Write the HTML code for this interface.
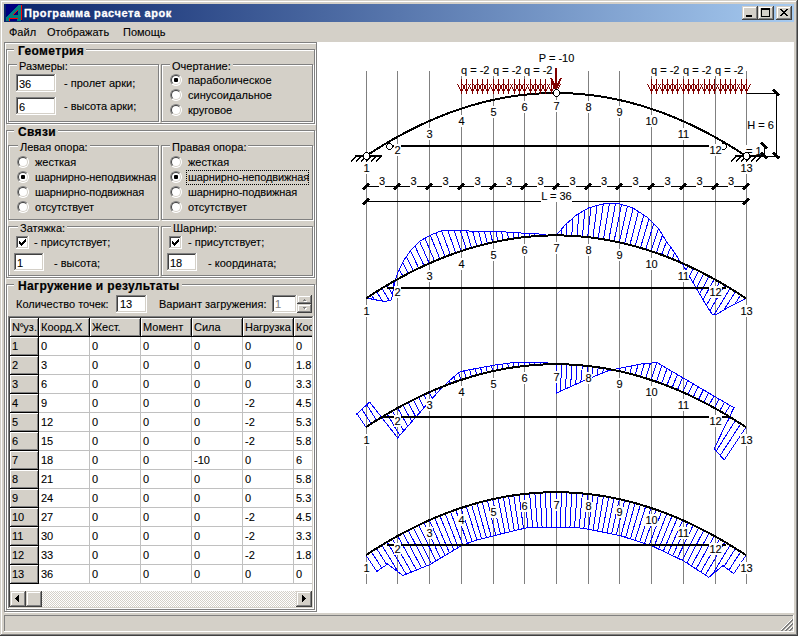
<!DOCTYPE html><html><head><meta charset="utf-8"><style>
html,body{margin:0;padding:0;width:798px;height:636px;overflow:hidden;background:#d4d0c8}
body>div,body div{position:absolute}
.t{white-space:nowrap;font-family:"Liberation Sans",sans-serif;font-size:11px;line-height:13px;color:#000;-webkit-text-stroke:0.1px currentColor}
.lb{white-space:nowrap;font-family:"Liberation Sans",sans-serif;font-size:11px;line-height:13px;color:#000;-webkit-text-stroke:0.1px #000}
.lb span{background:#fff;padding:0}
.rad{width:12px;height:12px}
.rad div{left:0;top:0;width:10px;height:10px;border-radius:50%;background:#fff;border:1px solid;border-color:#808080 #fff #fff #808080}
.rad div:after{content:"";position:absolute;left:0;top:0;width:8px;height:8px;border-radius:50%;border:1px solid;border-color:#404040 #d4d0c8 #d4d0c8 #404040}
.rad i{position:absolute;left:4px;top:4px;width:4px;height:4px;background:#000;border-radius:1px}
</style></head><body>
<div style="left:0;top:0;width:798px;height:636px;background:#d4d0c8"></div>
<div style="left:0px;top:0px;width:797px;height:1px;background:#d4d0c8;"></div>
<div style="left:0px;top:0px;width:1px;height:635px;background:#d4d0c8;"></div>
<div style="left:1px;top:1px;width:795px;height:1px;background:#ffffff;"></div>
<div style="left:1px;top:1px;width:1px;height:633px;background:#ffffff;"></div>
<div style="left:1px;top:634px;width:796px;height:1px;background:#808080;"></div>
<div style="left:796px;top:1px;width:1px;height:634px;background:#808080;"></div>
<div style="left:0px;top:635px;width:798px;height:1px;background:#404040;"></div>
<div style="left:797px;top:0px;width:1px;height:636px;background:#404040;"></div>
<div style="left:4px;top:4px;width:790px;height:18px;background:linear-gradient(to right,#0a246a,#a6caf0)"></div>
<svg style="position:absolute;left:0;top:0" width="30" height="24" shape-rendering="crispEdges"><rect x="6" y="4" width="16" height="17" fill="#000080"/><path d="M6,18 L18,5 L21,5 L21,21 L6,21 Z M13,15 L18,10 L18,15 Z M10,19 H17 V21 H10 Z" fill="#008080" fill-rule="evenodd"/><rect x="21" y="5" width="1" height="15" fill="#ff0000"/><rect x="9" y="18" width="9" height="1" fill="#ff0000"/><rect x="9" y="18" width="1" height="3" fill="#ff0000"/><path d="M13,14h1v1h-1zM14,13h1v1h-1zM15,12h1v1h-1zM16,11h1v1h-1zM17,10h1v1h-1z" fill="#ff0000"/></svg>
<div class="t" style="left:24px;top:7px;font-size:11px;font-weight:bold;color:#fff;letter-spacing:0.6px;-webkit-text-stroke:0.3px #fff;">Программа расчета арок</div>
<div style="left:742px;top:6px;width:16px;height:14px;background:#d4d0c8;"></div>
<div style="left:742px;top:6px;width:15px;height:1px;background:#d4d0c8;"></div>
<div style="left:742px;top:6px;width:1px;height:13px;background:#d4d0c8;"></div>
<div style="left:743px;top:7px;width:13px;height:1px;background:#ffffff;"></div>
<div style="left:743px;top:7px;width:1px;height:11px;background:#ffffff;"></div>
<div style="left:743px;top:18px;width:14px;height:1px;background:#808080;"></div>
<div style="left:756px;top:7px;width:1px;height:12px;background:#808080;"></div>
<div style="left:742px;top:19px;width:16px;height:1px;background:#404040;"></div>
<div style="left:757px;top:6px;width:1px;height:14px;background:#404040;"></div>
<div style="left:746px;top:15px;width:6px;height:2px;background:#000;"></div>
<div style="left:758px;top:6px;width:16px;height:14px;background:#d4d0c8;"></div>
<div style="left:758px;top:6px;width:15px;height:1px;background:#d4d0c8;"></div>
<div style="left:758px;top:6px;width:1px;height:13px;background:#d4d0c8;"></div>
<div style="left:759px;top:7px;width:13px;height:1px;background:#ffffff;"></div>
<div style="left:759px;top:7px;width:1px;height:11px;background:#ffffff;"></div>
<div style="left:759px;top:18px;width:14px;height:1px;background:#808080;"></div>
<div style="left:772px;top:7px;width:1px;height:12px;background:#808080;"></div>
<div style="left:758px;top:19px;width:16px;height:1px;background:#404040;"></div>
<div style="left:773px;top:6px;width:1px;height:14px;background:#404040;"></div>
<div style="left:761px;top:8px;width:7px;height:6px;border:1px solid #000;border-top-width:2px"></div>
<div style="left:776px;top:6px;width:16px;height:14px;background:#d4d0c8;"></div>
<div style="left:776px;top:6px;width:15px;height:1px;background:#d4d0c8;"></div>
<div style="left:776px;top:6px;width:1px;height:13px;background:#d4d0c8;"></div>
<div style="left:777px;top:7px;width:13px;height:1px;background:#ffffff;"></div>
<div style="left:777px;top:7px;width:1px;height:11px;background:#ffffff;"></div>
<div style="left:777px;top:18px;width:14px;height:1px;background:#808080;"></div>
<div style="left:790px;top:7px;width:1px;height:12px;background:#808080;"></div>
<div style="left:776px;top:19px;width:16px;height:1px;background:#404040;"></div>
<div style="left:791px;top:6px;width:1px;height:14px;background:#404040;"></div>
<svg style="position:absolute;left:776px;top:6px" width="16" height="14" shape-rendering="crispEdges"><path d="M4 3h2v1h-2zM10 3h2v1h-2zM5 4h2v1h-2zM9 4h2v1h-2zM6 5h4v1h-4zM7 6h2v1h-2zM6 7h4v1h-4zM5 8h2v1h-2zM9 8h2v1h-2zM4 9h2v1h-2zM10 9h2v1h-2z" fill="#000"/></svg>
<div class="t" style="left:9px;top:26px;font-size:11px;font-weight:normal;color:#000;">Файл</div>
<div class="t" style="left:47px;top:26px;font-size:11px;font-weight:normal;color:#000;">Отображать</div>
<div class="t" style="left:123px;top:26px;font-size:11px;font-weight:normal;color:#000;">Помощь</div>
<div style="left:5px;top:43px;width:313px;height:1px;background:#ffffff;"></div>
<div style="left:5px;top:43px;width:1px;height:570px;background:#ffffff;"></div>
<div style="left:5px;top:612px;width:313px;height:1px;background:#ffffff;"></div>
<div style="left:317px;top:43px;width:1px;height:570px;background:#ffffff;"></div>
<div style="left:4px;top:42px;width:313px;height:1px;background:#808080;"></div>
<div style="left:4px;top:42px;width:1px;height:570px;background:#808080;"></div>
<div style="left:4px;top:611px;width:313px;height:1px;background:#808080;"></div>
<div style="left:316px;top:42px;width:1px;height:570px;background:#808080;"></div>
<div style="left:7px;top:50px;width:309px;height:1px;background:#ffffff;"></div>
<div style="left:7px;top:50px;width:1px;height:75px;background:#ffffff;"></div>
<div style="left:7px;top:124px;width:309px;height:1px;background:#ffffff;"></div>
<div style="left:315px;top:50px;width:1px;height:75px;background:#ffffff;"></div>
<div style="left:6px;top:49px;width:309px;height:1px;background:#808080;"></div>
<div style="left:6px;top:49px;width:1px;height:75px;background:#808080;"></div>
<div style="left:6px;top:123px;width:309px;height:1px;background:#808080;"></div>
<div style="left:314px;top:49px;width:1px;height:75px;background:#808080;"></div>
<div class="t" style="left:18px;top:45px;font-size:12px;font-weight:bold;letter-spacing:0.35px;-webkit-text-stroke:0.2px #000;background:#d4d0c8;padding:0 2px 0 4px;margin-left:-4px;">Геометрия</div>
<div style="left:9px;top:65px;width:151px;height:1px;background:#ffffff;"></div>
<div style="left:9px;top:65px;width:1px;height:58px;background:#ffffff;"></div>
<div style="left:9px;top:122px;width:151px;height:1px;background:#ffffff;"></div>
<div style="left:159px;top:65px;width:1px;height:58px;background:#ffffff;"></div>
<div style="left:8px;top:64px;width:151px;height:1px;background:#808080;"></div>
<div style="left:8px;top:64px;width:1px;height:58px;background:#808080;"></div>
<div style="left:8px;top:121px;width:151px;height:1px;background:#808080;"></div>
<div style="left:158px;top:64px;width:1px;height:58px;background:#808080;"></div>
<div class="t" style="left:19px;top:60px;font-size:11px;font-weight:normal;color:#000;background:#d4d0c8;padding:0 2px 0 2px;margin-left:-2px;">Размеры:</div>
<div style="left:162px;top:65px;width:152px;height:1px;background:#ffffff;"></div>
<div style="left:162px;top:65px;width:1px;height:58px;background:#ffffff;"></div>
<div style="left:162px;top:122px;width:152px;height:1px;background:#ffffff;"></div>
<div style="left:313px;top:65px;width:1px;height:58px;background:#ffffff;"></div>
<div style="left:161px;top:64px;width:152px;height:1px;background:#808080;"></div>
<div style="left:161px;top:64px;width:1px;height:58px;background:#808080;"></div>
<div style="left:161px;top:121px;width:152px;height:1px;background:#808080;"></div>
<div style="left:312px;top:64px;width:1px;height:58px;background:#808080;"></div>
<div class="t" style="left:172px;top:60px;font-size:11px;font-weight:normal;color:#000;background:#d4d0c8;padding:0 2px 0 2px;margin-left:-2px;">Очертание:</div>
<div style="left:16px;top:74px;width:40px;height:18px;background:#ffffff;"></div>
<div style="left:16px;top:74px;width:39px;height:1px;background:#808080;"></div>
<div style="left:16px;top:74px;width:1px;height:17px;background:#808080;"></div>
<div style="left:17px;top:75px;width:37px;height:1px;background:#404040;"></div>
<div style="left:17px;top:75px;width:1px;height:15px;background:#404040;"></div>
<div style="left:17px;top:90px;width:38px;height:1px;background:#d4d0c8;"></div>
<div style="left:54px;top:75px;width:1px;height:16px;background:#d4d0c8;"></div>
<div style="left:16px;top:91px;width:40px;height:1px;background:#ffffff;"></div>
<div style="left:55px;top:74px;width:1px;height:18px;background:#ffffff;"></div>
<div class="t" style="left:19px;top:78px;font-size:11px;font-weight:normal;color:#000;">36</div>
<div style="left:16px;top:97px;width:40px;height:18px;background:#ffffff;"></div>
<div style="left:16px;top:97px;width:39px;height:1px;background:#808080;"></div>
<div style="left:16px;top:97px;width:1px;height:17px;background:#808080;"></div>
<div style="left:17px;top:98px;width:37px;height:1px;background:#404040;"></div>
<div style="left:17px;top:98px;width:1px;height:15px;background:#404040;"></div>
<div style="left:17px;top:113px;width:38px;height:1px;background:#d4d0c8;"></div>
<div style="left:54px;top:98px;width:1px;height:16px;background:#d4d0c8;"></div>
<div style="left:16px;top:114px;width:40px;height:1px;background:#ffffff;"></div>
<div style="left:55px;top:97px;width:1px;height:18px;background:#ffffff;"></div>
<div class="t" style="left:19px;top:101px;font-size:11px;font-weight:normal;color:#000;">6</div>
<div class="t" style="left:64px;top:77px;font-size:11px;font-weight:normal;color:#000;">- пролет арки;</div>
<div class="t" style="left:64px;top:100px;font-size:11px;font-weight:normal;color:#000;">- высота арки;</div>
<div class="rad" style="left:170px;top:74px;"><div></div><i></i></div>
<div class="t" style="left:188px;top:74px;font-size:11px;font-weight:normal;color:#000;">параболическое</div>
<div class="rad" style="left:170px;top:89px;"><div></div></div>
<div class="t" style="left:188px;top:89px;font-size:11px;font-weight:normal;color:#000;">синусоидальное</div>
<div class="rad" style="left:170px;top:104px;"><div></div></div>
<div class="t" style="left:188px;top:104px;font-size:11px;font-weight:normal;color:#000;">круговое</div>
<div style="left:7px;top:131px;width:309px;height:1px;background:#ffffff;"></div>
<div style="left:7px;top:131px;width:1px;height:148px;background:#ffffff;"></div>
<div style="left:7px;top:278px;width:309px;height:1px;background:#ffffff;"></div>
<div style="left:315px;top:131px;width:1px;height:148px;background:#ffffff;"></div>
<div style="left:6px;top:130px;width:309px;height:1px;background:#808080;"></div>
<div style="left:6px;top:130px;width:1px;height:148px;background:#808080;"></div>
<div style="left:6px;top:277px;width:309px;height:1px;background:#808080;"></div>
<div style="left:314px;top:130px;width:1px;height:148px;background:#808080;"></div>
<div class="t" style="left:18px;top:126px;font-size:12px;font-weight:bold;letter-spacing:0.35px;-webkit-text-stroke:0.2px #000;background:#d4d0c8;padding:0 2px 0 4px;margin-left:-4px;">Связи</div>
<div style="left:9px;top:146px;width:151px;height:1px;background:#ffffff;"></div>
<div style="left:9px;top:146px;width:1px;height:75px;background:#ffffff;"></div>
<div style="left:9px;top:220px;width:151px;height:1px;background:#ffffff;"></div>
<div style="left:159px;top:146px;width:1px;height:75px;background:#ffffff;"></div>
<div style="left:8px;top:145px;width:151px;height:1px;background:#808080;"></div>
<div style="left:8px;top:145px;width:1px;height:75px;background:#808080;"></div>
<div style="left:8px;top:219px;width:151px;height:1px;background:#808080;"></div>
<div style="left:158px;top:145px;width:1px;height:75px;background:#808080;"></div>
<div class="t" style="left:20px;top:141px;font-size:11px;font-weight:normal;color:#000;background:#d4d0c8;padding:0 2px 0 2px;margin-left:-2px;">Левая опора:</div>
<div style="left:162px;top:146px;width:152px;height:1px;background:#ffffff;"></div>
<div style="left:162px;top:146px;width:1px;height:75px;background:#ffffff;"></div>
<div style="left:162px;top:220px;width:152px;height:1px;background:#ffffff;"></div>
<div style="left:313px;top:146px;width:1px;height:75px;background:#ffffff;"></div>
<div style="left:161px;top:145px;width:152px;height:1px;background:#808080;"></div>
<div style="left:161px;top:145px;width:1px;height:75px;background:#808080;"></div>
<div style="left:161px;top:219px;width:152px;height:1px;background:#808080;"></div>
<div style="left:312px;top:145px;width:1px;height:75px;background:#808080;"></div>
<div class="t" style="left:172px;top:141px;font-size:11px;font-weight:normal;color:#000;background:#d4d0c8;padding:0 2px 0 2px;margin-left:-2px;">Правая опора:</div>
<div class="rad" style="left:17px;top:156px;"><div></div></div>
<div class="t" style="left:35px;top:156px;font-size:11px;font-weight:normal;color:#000;">жесткая</div>
<div class="rad" style="left:170px;top:156px;"><div></div></div>
<div class="t" style="left:188px;top:156px;font-size:11px;font-weight:normal;color:#000;">жесткая</div>
<div class="rad" style="left:17px;top:171px;"><div></div><i></i></div>
<div class="t" style="left:35px;top:171px;font-size:11px;font-weight:normal;color:#000;letter-spacing:-0.1px;">шарнирно-неподвижная</div>
<div class="rad" style="left:170px;top:171px;"><div></div><i></i></div>
<div class="t" style="left:188px;top:171px;font-size:11px;font-weight:normal;color:#000;letter-spacing:-0.1px;">шарнирно-неподвижная</div>
<div class="rad" style="left:17px;top:186px;"><div></div></div>
<div class="t" style="left:35px;top:186px;font-size:11px;font-weight:normal;color:#000;letter-spacing:-0.1px;">шарнирно-подвижная</div>
<div class="rad" style="left:170px;top:186px;"><div></div></div>
<div class="t" style="left:188px;top:186px;font-size:11px;font-weight:normal;color:#000;letter-spacing:-0.1px;">шарнирно-подвижная</div>
<div class="rad" style="left:17px;top:201px;"><div></div></div>
<div class="t" style="left:35px;top:201px;font-size:11px;font-weight:normal;color:#000;">отсутствует</div>
<div class="rad" style="left:170px;top:201px;"><div></div></div>
<div class="t" style="left:188px;top:201px;font-size:11px;font-weight:normal;color:#000;">отсутствует</div>
<div style="left:186px;top:170px;width:121px;height:13px;border:1px dotted #000"></div>
<div style="left:9px;top:227px;width:151px;height:1px;background:#ffffff;"></div>
<div style="left:9px;top:227px;width:1px;height:50px;background:#ffffff;"></div>
<div style="left:9px;top:276px;width:151px;height:1px;background:#ffffff;"></div>
<div style="left:159px;top:227px;width:1px;height:50px;background:#ffffff;"></div>
<div style="left:8px;top:226px;width:151px;height:1px;background:#808080;"></div>
<div style="left:8px;top:226px;width:1px;height:50px;background:#808080;"></div>
<div style="left:8px;top:275px;width:151px;height:1px;background:#808080;"></div>
<div style="left:158px;top:226px;width:1px;height:50px;background:#808080;"></div>
<div class="t" style="left:20px;top:222px;font-size:11px;font-weight:normal;color:#000;background:#d4d0c8;padding:0 2px 0 2px;margin-left:-2px;">Затяжка:</div>
<div style="left:162px;top:227px;width:152px;height:1px;background:#ffffff;"></div>
<div style="left:162px;top:227px;width:1px;height:50px;background:#ffffff;"></div>
<div style="left:162px;top:276px;width:152px;height:1px;background:#ffffff;"></div>
<div style="left:313px;top:227px;width:1px;height:50px;background:#ffffff;"></div>
<div style="left:161px;top:226px;width:152px;height:1px;background:#808080;"></div>
<div style="left:161px;top:226px;width:1px;height:50px;background:#808080;"></div>
<div style="left:161px;top:275px;width:152px;height:1px;background:#808080;"></div>
<div style="left:312px;top:226px;width:1px;height:50px;background:#808080;"></div>
<div class="t" style="left:173px;top:222px;font-size:11px;font-weight:normal;color:#000;background:#d4d0c8;padding:0 2px 0 2px;margin-left:-2px;">Шарнир:</div>
<div style="left:16px;top:236px;width:13px;height:13px;background:#ffffff;"></div>
<div style="left:16px;top:236px;width:12px;height:1px;background:#808080;"></div>
<div style="left:16px;top:236px;width:1px;height:12px;background:#808080;"></div>
<div style="left:17px;top:237px;width:10px;height:1px;background:#404040;"></div>
<div style="left:17px;top:237px;width:1px;height:10px;background:#404040;"></div>
<div style="left:17px;top:247px;width:11px;height:1px;background:#d4d0c8;"></div>
<div style="left:27px;top:237px;width:1px;height:11px;background:#d4d0c8;"></div>
<div style="left:16px;top:248px;width:13px;height:1px;background:#ffffff;"></div>
<div style="left:28px;top:236px;width:1px;height:13px;background:#ffffff;"></div>
<svg style="position:absolute;left:16px;top:236px" width="13" height="13" shape-rendering="crispEdges"><path d="M3 5h1v3h-1zM4 6h1v3h-1zM5 7h1v3h-1zM6 6h1v3h-1zM7 5h1v3h-1zM8 4h1v3h-1zM9 3h1v3h-1z" fill="#000"/></svg>
<div class="t" style="left:34px;top:236px;font-size:11px;font-weight:normal;color:#000;">- присутствует;</div>
<div style="left:169px;top:236px;width:13px;height:13px;background:#ffffff;"></div>
<div style="left:169px;top:236px;width:12px;height:1px;background:#808080;"></div>
<div style="left:169px;top:236px;width:1px;height:12px;background:#808080;"></div>
<div style="left:170px;top:237px;width:10px;height:1px;background:#404040;"></div>
<div style="left:170px;top:237px;width:1px;height:10px;background:#404040;"></div>
<div style="left:170px;top:247px;width:11px;height:1px;background:#d4d0c8;"></div>
<div style="left:180px;top:237px;width:1px;height:11px;background:#d4d0c8;"></div>
<div style="left:169px;top:248px;width:13px;height:1px;background:#ffffff;"></div>
<div style="left:181px;top:236px;width:1px;height:13px;background:#ffffff;"></div>
<svg style="position:absolute;left:169px;top:236px" width="13" height="13" shape-rendering="crispEdges"><path d="M3 5h1v3h-1zM4 6h1v3h-1zM5 7h1v3h-1zM6 6h1v3h-1zM7 5h1v3h-1zM8 4h1v3h-1zM9 3h1v3h-1z" fill="#000"/></svg>
<div class="t" style="left:188px;top:236px;font-size:11px;font-weight:normal;color:#000;">- присутствует;</div>
<div style="left:14px;top:253px;width:30px;height:18px;background:#ffffff;"></div>
<div style="left:14px;top:253px;width:29px;height:1px;background:#808080;"></div>
<div style="left:14px;top:253px;width:1px;height:17px;background:#808080;"></div>
<div style="left:15px;top:254px;width:27px;height:1px;background:#404040;"></div>
<div style="left:15px;top:254px;width:1px;height:15px;background:#404040;"></div>
<div style="left:15px;top:269px;width:28px;height:1px;background:#d4d0c8;"></div>
<div style="left:42px;top:254px;width:1px;height:16px;background:#d4d0c8;"></div>
<div style="left:14px;top:270px;width:30px;height:1px;background:#ffffff;"></div>
<div style="left:43px;top:253px;width:1px;height:18px;background:#ffffff;"></div>
<div class="t" style="left:17px;top:257px;font-size:11px;font-weight:normal;color:#000;">1</div>
<div style="left:167px;top:253px;width:30px;height:18px;background:#ffffff;"></div>
<div style="left:167px;top:253px;width:29px;height:1px;background:#808080;"></div>
<div style="left:167px;top:253px;width:1px;height:17px;background:#808080;"></div>
<div style="left:168px;top:254px;width:27px;height:1px;background:#404040;"></div>
<div style="left:168px;top:254px;width:1px;height:15px;background:#404040;"></div>
<div style="left:168px;top:269px;width:28px;height:1px;background:#d4d0c8;"></div>
<div style="left:195px;top:254px;width:1px;height:16px;background:#d4d0c8;"></div>
<div style="left:167px;top:270px;width:30px;height:1px;background:#ffffff;"></div>
<div style="left:196px;top:253px;width:1px;height:18px;background:#ffffff;"></div>
<div class="t" style="left:170px;top:257px;font-size:11px;font-weight:normal;color:#000;">18</div>
<div class="t" style="left:54px;top:257px;font-size:11px;font-weight:normal;color:#000;">- высота;</div>
<div class="t" style="left:208px;top:257px;font-size:11px;font-weight:normal;color:#000;">- координата;</div>
<div style="left:7px;top:285px;width:309px;height:1px;background:#ffffff;"></div>
<div style="left:7px;top:285px;width:1px;height:326px;background:#ffffff;"></div>
<div style="left:7px;top:610px;width:309px;height:1px;background:#ffffff;"></div>
<div style="left:315px;top:285px;width:1px;height:326px;background:#ffffff;"></div>
<div style="left:6px;top:284px;width:309px;height:1px;background:#808080;"></div>
<div style="left:6px;top:284px;width:1px;height:326px;background:#808080;"></div>
<div style="left:6px;top:609px;width:309px;height:1px;background:#808080;"></div>
<div style="left:314px;top:284px;width:1px;height:326px;background:#808080;"></div>
<div class="t" style="left:18px;top:280px;font-size:12px;font-weight:bold;letter-spacing:0.35px;-webkit-text-stroke:0.2px #000;background:#d4d0c8;padding:0 2px 0 4px;margin-left:-4px;">Нагружение и результаты</div>
<div class="t" style="left:16px;top:298px;font-size:11px;font-weight:normal;color:#000;">Количество точек:</div>
<div style="left:116px;top:295px;width:31px;height:18px;background:#ffffff;"></div>
<div style="left:116px;top:295px;width:30px;height:1px;background:#808080;"></div>
<div style="left:116px;top:295px;width:1px;height:17px;background:#808080;"></div>
<div style="left:117px;top:296px;width:28px;height:1px;background:#404040;"></div>
<div style="left:117px;top:296px;width:1px;height:15px;background:#404040;"></div>
<div style="left:117px;top:311px;width:29px;height:1px;background:#d4d0c8;"></div>
<div style="left:145px;top:296px;width:1px;height:16px;background:#d4d0c8;"></div>
<div style="left:116px;top:312px;width:31px;height:1px;background:#ffffff;"></div>
<div style="left:146px;top:295px;width:1px;height:18px;background:#ffffff;"></div>
<div class="t" style="left:120px;top:298px;font-size:11px;font-weight:normal;color:#000;">13</div>
<div class="t" style="left:159px;top:298px;font-size:11px;font-weight:normal;color:#000;">Вариант загружения:</div>
<div style="left:272px;top:295px;width:25px;height:18px;background:#ffffff;"></div>
<div style="left:272px;top:295px;width:24px;height:1px;background:#808080;"></div>
<div style="left:272px;top:295px;width:1px;height:17px;background:#808080;"></div>
<div style="left:273px;top:296px;width:22px;height:1px;background:#404040;"></div>
<div style="left:273px;top:296px;width:1px;height:15px;background:#404040;"></div>
<div style="left:273px;top:311px;width:23px;height:1px;background:#d4d0c8;"></div>
<div style="left:295px;top:296px;width:1px;height:16px;background:#d4d0c8;"></div>
<div style="left:272px;top:312px;width:25px;height:1px;background:#ffffff;"></div>
<div style="left:296px;top:295px;width:1px;height:18px;background:#ffffff;"></div>
<div class="t" style="left:275px;top:298px;font-size:11px;font-weight:normal;color:#808080;text-shadow:1px 1px 0 #fff;">1</div>
<div style="left:297px;top:295px;width:15px;height:9px;background:#d4d0c8;"></div>
<div style="left:297px;top:295px;width:14px;height:1px;background:#d4d0c8;"></div>
<div style="left:297px;top:295px;width:1px;height:8px;background:#d4d0c8;"></div>
<div style="left:298px;top:296px;width:12px;height:1px;background:#ffffff;"></div>
<div style="left:298px;top:296px;width:1px;height:6px;background:#ffffff;"></div>
<div style="left:298px;top:302px;width:13px;height:1px;background:#808080;"></div>
<div style="left:310px;top:296px;width:1px;height:7px;background:#808080;"></div>
<div style="left:297px;top:303px;width:15px;height:1px;background:#404040;"></div>
<div style="left:311px;top:295px;width:1px;height:9px;background:#404040;"></div>
<div style="left:297px;top:304px;width:15px;height:9px;background:#d4d0c8;"></div>
<div style="left:297px;top:304px;width:14px;height:1px;background:#d4d0c8;"></div>
<div style="left:297px;top:304px;width:1px;height:8px;background:#d4d0c8;"></div>
<div style="left:298px;top:305px;width:12px;height:1px;background:#ffffff;"></div>
<div style="left:298px;top:305px;width:1px;height:6px;background:#ffffff;"></div>
<div style="left:298px;top:311px;width:13px;height:1px;background:#808080;"></div>
<div style="left:310px;top:305px;width:1px;height:7px;background:#808080;"></div>
<div style="left:297px;top:312px;width:15px;height:1px;background:#404040;"></div>
<div style="left:311px;top:304px;width:1px;height:9px;background:#404040;"></div>
<svg style="position:absolute;left:297px;top:295px" width="15" height="18" shape-rendering="crispEdges"><path d="M8,5h1v1h-1zM7,6h3v1h-3zM7,13h3v1h-3zM8,14h1v1h-1z" fill="#fff"/><path d="M7,4h1v1h-1zM6,5h3v1h-3zM6,12h3v1h-3zM7,13h1v1h-1z" fill="#808080"/></svg>
<div style="left:8px;top:316px;width:306px;height:293px;background:#ffffff;"></div>
<div style="left:8px;top:316px;width:305px;height:1px;background:#808080;"></div>
<div style="left:8px;top:316px;width:1px;height:292px;background:#808080;"></div>
<div style="left:9px;top:317px;width:303px;height:1px;background:#404040;"></div>
<div style="left:9px;top:317px;width:1px;height:290px;background:#404040;"></div>
<div style="left:9px;top:607px;width:304px;height:1px;background:#d4d0c8;"></div>
<div style="left:312px;top:317px;width:1px;height:291px;background:#d4d0c8;"></div>
<div style="left:8px;top:608px;width:306px;height:1px;background:#ffffff;"></div>
<div style="left:313px;top:316px;width:1px;height:293px;background:#ffffff;"></div>
<div style="left:10px;top:318px;width:302px;height:289px;background:#fff;overflow:hidden">
<div style="left:0;top:18px;width:302px;height:1px;background:#000"></div>
<div style="left:28px;top:0;width:1px;height:266px;background:#000"></div>
<div style="left:0px;top:0px;width:28px;height:18px;background:#d4d0c8;box-shadow:inset 1px 1px 0 #fff, inset -1px -1px 0 #808080;overflow:hidden"><div class="t" style="left:2px;top:3px"><span style="letter-spacing:-0.5px">N°</span>уз.</div></div>
<div style="left:28px;top:0;width:1px;height:18px;background:#000"></div>
<div style="left:29px;top:0px;width:50px;height:18px;background:#d4d0c8;box-shadow:inset 1px 1px 0 #fff, inset -1px -1px 0 #808080;overflow:hidden"><div class="t" style="left:2px;top:3px">Коорд.X</div></div>
<div style="left:79px;top:0;width:1px;height:18px;background:#000"></div>
<div style="left:80px;top:0px;width:50px;height:18px;background:#d4d0c8;box-shadow:inset 1px 1px 0 #fff, inset -1px -1px 0 #808080;overflow:hidden"><div class="t" style="left:2px;top:3px">Жест.</div></div>
<div style="left:130px;top:0;width:1px;height:18px;background:#000"></div>
<div style="left:131px;top:0px;width:50px;height:18px;background:#d4d0c8;box-shadow:inset 1px 1px 0 #fff, inset -1px -1px 0 #808080;overflow:hidden"><div class="t" style="left:2px;top:3px">Момент</div></div>
<div style="left:181px;top:0;width:1px;height:18px;background:#000"></div>
<div style="left:182px;top:0px;width:50px;height:18px;background:#d4d0c8;box-shadow:inset 1px 1px 0 #fff, inset -1px -1px 0 #808080;overflow:hidden"><div class="t" style="left:2px;top:3px">Сила</div></div>
<div style="left:232px;top:0;width:1px;height:18px;background:#000"></div>
<div style="left:233px;top:0px;width:50px;height:18px;background:#d4d0c8;box-shadow:inset 1px 1px 0 #fff, inset -1px -1px 0 #808080;overflow:hidden"><div class="t" style="left:2px;top:3px">Нагрузка</div></div>
<div style="left:283px;top:0;width:1px;height:18px;background:#000"></div>
<div style="left:284px;top:0px;width:50px;height:18px;background:#d4d0c8;box-shadow:inset 1px 1px 0 #fff, inset -1px -1px 0 #808080;overflow:hidden"><div class="t" style="left:2px;top:3px">Коорд.Y</div></div>
<div style="left:334px;top:0;width:1px;height:18px;background:#000"></div>
<div style="left:0px;top:19px;width:28px;height:18px;background:#d4d0c8;box-shadow:inset 1px 1px 0 #fff, inset -1px -1px 0 #808080;overflow:hidden"><div class="t" style="left:2px;top:3px">1</div></div>
<div style="left:0;top:37px;width:28px;height:1px;background:#000"></div>
<div style="left:29px;top:37px;width:273px;height:1px;background:#c0c0c0"></div>
<div style="left:79px;top:19px;width:1px;height:19px;background:#c0c0c0"></div>
<div class="t" style="left:31px;top:22px">0</div>
<div style="left:130px;top:19px;width:1px;height:19px;background:#c0c0c0"></div>
<div class="t" style="left:82px;top:22px">0</div>
<div style="left:181px;top:19px;width:1px;height:19px;background:#c0c0c0"></div>
<div class="t" style="left:133px;top:22px">0</div>
<div style="left:232px;top:19px;width:1px;height:19px;background:#c0c0c0"></div>
<div class="t" style="left:184px;top:22px">0</div>
<div style="left:283px;top:19px;width:1px;height:19px;background:#c0c0c0"></div>
<div class="t" style="left:235px;top:22px">0</div>
<div style="left:334px;top:19px;width:1px;height:19px;background:#c0c0c0"></div>
<div class="t" style="left:286px;top:22px">0</div>
<div style="left:0px;top:38px;width:28px;height:18px;background:#d4d0c8;box-shadow:inset 1px 1px 0 #fff, inset -1px -1px 0 #808080;overflow:hidden"><div class="t" style="left:2px;top:3px">2</div></div>
<div style="left:0;top:56px;width:28px;height:1px;background:#000"></div>
<div style="left:29px;top:56px;width:273px;height:1px;background:#c0c0c0"></div>
<div style="left:79px;top:38px;width:1px;height:19px;background:#c0c0c0"></div>
<div class="t" style="left:31px;top:41px">3</div>
<div style="left:130px;top:38px;width:1px;height:19px;background:#c0c0c0"></div>
<div class="t" style="left:82px;top:41px">0</div>
<div style="left:181px;top:38px;width:1px;height:19px;background:#c0c0c0"></div>
<div class="t" style="left:133px;top:41px">0</div>
<div style="left:232px;top:38px;width:1px;height:19px;background:#c0c0c0"></div>
<div class="t" style="left:184px;top:41px">0</div>
<div style="left:283px;top:38px;width:1px;height:19px;background:#c0c0c0"></div>
<div class="t" style="left:235px;top:41px">0</div>
<div style="left:334px;top:38px;width:1px;height:19px;background:#c0c0c0"></div>
<div class="t" style="left:286px;top:41px">1.8</div>
<div style="left:0px;top:57px;width:28px;height:18px;background:#d4d0c8;box-shadow:inset 1px 1px 0 #fff, inset -1px -1px 0 #808080;overflow:hidden"><div class="t" style="left:2px;top:3px">3</div></div>
<div style="left:0;top:75px;width:28px;height:1px;background:#000"></div>
<div style="left:29px;top:75px;width:273px;height:1px;background:#c0c0c0"></div>
<div style="left:79px;top:57px;width:1px;height:19px;background:#c0c0c0"></div>
<div class="t" style="left:31px;top:60px">6</div>
<div style="left:130px;top:57px;width:1px;height:19px;background:#c0c0c0"></div>
<div class="t" style="left:82px;top:60px">0</div>
<div style="left:181px;top:57px;width:1px;height:19px;background:#c0c0c0"></div>
<div class="t" style="left:133px;top:60px">0</div>
<div style="left:232px;top:57px;width:1px;height:19px;background:#c0c0c0"></div>
<div class="t" style="left:184px;top:60px">0</div>
<div style="left:283px;top:57px;width:1px;height:19px;background:#c0c0c0"></div>
<div class="t" style="left:235px;top:60px">0</div>
<div style="left:334px;top:57px;width:1px;height:19px;background:#c0c0c0"></div>
<div class="t" style="left:286px;top:60px">3.3</div>
<div style="left:0px;top:76px;width:28px;height:18px;background:#d4d0c8;box-shadow:inset 1px 1px 0 #fff, inset -1px -1px 0 #808080;overflow:hidden"><div class="t" style="left:2px;top:3px">4</div></div>
<div style="left:0;top:94px;width:28px;height:1px;background:#000"></div>
<div style="left:29px;top:94px;width:273px;height:1px;background:#c0c0c0"></div>
<div style="left:79px;top:76px;width:1px;height:19px;background:#c0c0c0"></div>
<div class="t" style="left:31px;top:79px">9</div>
<div style="left:130px;top:76px;width:1px;height:19px;background:#c0c0c0"></div>
<div class="t" style="left:82px;top:79px">0</div>
<div style="left:181px;top:76px;width:1px;height:19px;background:#c0c0c0"></div>
<div class="t" style="left:133px;top:79px">0</div>
<div style="left:232px;top:76px;width:1px;height:19px;background:#c0c0c0"></div>
<div class="t" style="left:184px;top:79px">0</div>
<div style="left:283px;top:76px;width:1px;height:19px;background:#c0c0c0"></div>
<div class="t" style="left:235px;top:79px">-2</div>
<div style="left:334px;top:76px;width:1px;height:19px;background:#c0c0c0"></div>
<div class="t" style="left:286px;top:79px">4.5</div>
<div style="left:0px;top:95px;width:28px;height:18px;background:#d4d0c8;box-shadow:inset 1px 1px 0 #fff, inset -1px -1px 0 #808080;overflow:hidden"><div class="t" style="left:2px;top:3px">5</div></div>
<div style="left:0;top:113px;width:28px;height:1px;background:#000"></div>
<div style="left:29px;top:113px;width:273px;height:1px;background:#c0c0c0"></div>
<div style="left:79px;top:95px;width:1px;height:19px;background:#c0c0c0"></div>
<div class="t" style="left:31px;top:98px">12</div>
<div style="left:130px;top:95px;width:1px;height:19px;background:#c0c0c0"></div>
<div class="t" style="left:82px;top:98px">0</div>
<div style="left:181px;top:95px;width:1px;height:19px;background:#c0c0c0"></div>
<div class="t" style="left:133px;top:98px">0</div>
<div style="left:232px;top:95px;width:1px;height:19px;background:#c0c0c0"></div>
<div class="t" style="left:184px;top:98px">0</div>
<div style="left:283px;top:95px;width:1px;height:19px;background:#c0c0c0"></div>
<div class="t" style="left:235px;top:98px">-2</div>
<div style="left:334px;top:95px;width:1px;height:19px;background:#c0c0c0"></div>
<div class="t" style="left:286px;top:98px">5.3</div>
<div style="left:0px;top:114px;width:28px;height:18px;background:#d4d0c8;box-shadow:inset 1px 1px 0 #fff, inset -1px -1px 0 #808080;overflow:hidden"><div class="t" style="left:2px;top:3px">6</div></div>
<div style="left:0;top:132px;width:28px;height:1px;background:#000"></div>
<div style="left:29px;top:132px;width:273px;height:1px;background:#c0c0c0"></div>
<div style="left:79px;top:114px;width:1px;height:19px;background:#c0c0c0"></div>
<div class="t" style="left:31px;top:117px">15</div>
<div style="left:130px;top:114px;width:1px;height:19px;background:#c0c0c0"></div>
<div class="t" style="left:82px;top:117px">0</div>
<div style="left:181px;top:114px;width:1px;height:19px;background:#c0c0c0"></div>
<div class="t" style="left:133px;top:117px">0</div>
<div style="left:232px;top:114px;width:1px;height:19px;background:#c0c0c0"></div>
<div class="t" style="left:184px;top:117px">0</div>
<div style="left:283px;top:114px;width:1px;height:19px;background:#c0c0c0"></div>
<div class="t" style="left:235px;top:117px">-2</div>
<div style="left:334px;top:114px;width:1px;height:19px;background:#c0c0c0"></div>
<div class="t" style="left:286px;top:117px">5.8</div>
<div style="left:0px;top:133px;width:28px;height:18px;background:#d4d0c8;box-shadow:inset 1px 1px 0 #fff, inset -1px -1px 0 #808080;overflow:hidden"><div class="t" style="left:2px;top:3px">7</div></div>
<div style="left:0;top:151px;width:28px;height:1px;background:#000"></div>
<div style="left:29px;top:151px;width:273px;height:1px;background:#c0c0c0"></div>
<div style="left:79px;top:133px;width:1px;height:19px;background:#c0c0c0"></div>
<div class="t" style="left:31px;top:136px">18</div>
<div style="left:130px;top:133px;width:1px;height:19px;background:#c0c0c0"></div>
<div class="t" style="left:82px;top:136px">0</div>
<div style="left:181px;top:133px;width:1px;height:19px;background:#c0c0c0"></div>
<div class="t" style="left:133px;top:136px">0</div>
<div style="left:232px;top:133px;width:1px;height:19px;background:#c0c0c0"></div>
<div class="t" style="left:184px;top:136px">-10</div>
<div style="left:283px;top:133px;width:1px;height:19px;background:#c0c0c0"></div>
<div class="t" style="left:235px;top:136px">0</div>
<div style="left:334px;top:133px;width:1px;height:19px;background:#c0c0c0"></div>
<div class="t" style="left:286px;top:136px">6</div>
<div style="left:0px;top:152px;width:28px;height:18px;background:#d4d0c8;box-shadow:inset 1px 1px 0 #fff, inset -1px -1px 0 #808080;overflow:hidden"><div class="t" style="left:2px;top:3px">8</div></div>
<div style="left:0;top:170px;width:28px;height:1px;background:#000"></div>
<div style="left:29px;top:170px;width:273px;height:1px;background:#c0c0c0"></div>
<div style="left:79px;top:152px;width:1px;height:19px;background:#c0c0c0"></div>
<div class="t" style="left:31px;top:155px">21</div>
<div style="left:130px;top:152px;width:1px;height:19px;background:#c0c0c0"></div>
<div class="t" style="left:82px;top:155px">0</div>
<div style="left:181px;top:152px;width:1px;height:19px;background:#c0c0c0"></div>
<div class="t" style="left:133px;top:155px">0</div>
<div style="left:232px;top:152px;width:1px;height:19px;background:#c0c0c0"></div>
<div class="t" style="left:184px;top:155px">0</div>
<div style="left:283px;top:152px;width:1px;height:19px;background:#c0c0c0"></div>
<div class="t" style="left:235px;top:155px">0</div>
<div style="left:334px;top:152px;width:1px;height:19px;background:#c0c0c0"></div>
<div class="t" style="left:286px;top:155px">5.8</div>
<div style="left:0px;top:171px;width:28px;height:18px;background:#d4d0c8;box-shadow:inset 1px 1px 0 #fff, inset -1px -1px 0 #808080;overflow:hidden"><div class="t" style="left:2px;top:3px">9</div></div>
<div style="left:0;top:189px;width:28px;height:1px;background:#000"></div>
<div style="left:29px;top:189px;width:273px;height:1px;background:#c0c0c0"></div>
<div style="left:79px;top:171px;width:1px;height:19px;background:#c0c0c0"></div>
<div class="t" style="left:31px;top:174px">24</div>
<div style="left:130px;top:171px;width:1px;height:19px;background:#c0c0c0"></div>
<div class="t" style="left:82px;top:174px">0</div>
<div style="left:181px;top:171px;width:1px;height:19px;background:#c0c0c0"></div>
<div class="t" style="left:133px;top:174px">0</div>
<div style="left:232px;top:171px;width:1px;height:19px;background:#c0c0c0"></div>
<div class="t" style="left:184px;top:174px">0</div>
<div style="left:283px;top:171px;width:1px;height:19px;background:#c0c0c0"></div>
<div class="t" style="left:235px;top:174px">0</div>
<div style="left:334px;top:171px;width:1px;height:19px;background:#c0c0c0"></div>
<div class="t" style="left:286px;top:174px">5.3</div>
<div style="left:0px;top:190px;width:28px;height:18px;background:#d4d0c8;box-shadow:inset 1px 1px 0 #fff, inset -1px -1px 0 #808080;overflow:hidden"><div class="t" style="left:2px;top:3px">10</div></div>
<div style="left:0;top:208px;width:28px;height:1px;background:#000"></div>
<div style="left:29px;top:208px;width:273px;height:1px;background:#c0c0c0"></div>
<div style="left:79px;top:190px;width:1px;height:19px;background:#c0c0c0"></div>
<div class="t" style="left:31px;top:193px">27</div>
<div style="left:130px;top:190px;width:1px;height:19px;background:#c0c0c0"></div>
<div class="t" style="left:82px;top:193px">0</div>
<div style="left:181px;top:190px;width:1px;height:19px;background:#c0c0c0"></div>
<div class="t" style="left:133px;top:193px">0</div>
<div style="left:232px;top:190px;width:1px;height:19px;background:#c0c0c0"></div>
<div class="t" style="left:184px;top:193px">0</div>
<div style="left:283px;top:190px;width:1px;height:19px;background:#c0c0c0"></div>
<div class="t" style="left:235px;top:193px">-2</div>
<div style="left:334px;top:190px;width:1px;height:19px;background:#c0c0c0"></div>
<div class="t" style="left:286px;top:193px">4.5</div>
<div style="left:0px;top:209px;width:28px;height:18px;background:#d4d0c8;box-shadow:inset 1px 1px 0 #fff, inset -1px -1px 0 #808080;overflow:hidden"><div class="t" style="left:2px;top:3px">11</div></div>
<div style="left:0;top:227px;width:28px;height:1px;background:#000"></div>
<div style="left:29px;top:227px;width:273px;height:1px;background:#c0c0c0"></div>
<div style="left:79px;top:209px;width:1px;height:19px;background:#c0c0c0"></div>
<div class="t" style="left:31px;top:212px">30</div>
<div style="left:130px;top:209px;width:1px;height:19px;background:#c0c0c0"></div>
<div class="t" style="left:82px;top:212px">0</div>
<div style="left:181px;top:209px;width:1px;height:19px;background:#c0c0c0"></div>
<div class="t" style="left:133px;top:212px">0</div>
<div style="left:232px;top:209px;width:1px;height:19px;background:#c0c0c0"></div>
<div class="t" style="left:184px;top:212px">0</div>
<div style="left:283px;top:209px;width:1px;height:19px;background:#c0c0c0"></div>
<div class="t" style="left:235px;top:212px">-2</div>
<div style="left:334px;top:209px;width:1px;height:19px;background:#c0c0c0"></div>
<div class="t" style="left:286px;top:212px">3.3</div>
<div style="left:0px;top:228px;width:28px;height:18px;background:#d4d0c8;box-shadow:inset 1px 1px 0 #fff, inset -1px -1px 0 #808080;overflow:hidden"><div class="t" style="left:2px;top:3px">12</div></div>
<div style="left:0;top:246px;width:28px;height:1px;background:#000"></div>
<div style="left:29px;top:246px;width:273px;height:1px;background:#c0c0c0"></div>
<div style="left:79px;top:228px;width:1px;height:19px;background:#c0c0c0"></div>
<div class="t" style="left:31px;top:231px">33</div>
<div style="left:130px;top:228px;width:1px;height:19px;background:#c0c0c0"></div>
<div class="t" style="left:82px;top:231px">0</div>
<div style="left:181px;top:228px;width:1px;height:19px;background:#c0c0c0"></div>
<div class="t" style="left:133px;top:231px">0</div>
<div style="left:232px;top:228px;width:1px;height:19px;background:#c0c0c0"></div>
<div class="t" style="left:184px;top:231px">0</div>
<div style="left:283px;top:228px;width:1px;height:19px;background:#c0c0c0"></div>
<div class="t" style="left:235px;top:231px">-2</div>
<div style="left:334px;top:228px;width:1px;height:19px;background:#c0c0c0"></div>
<div class="t" style="left:286px;top:231px">1.8</div>
<div style="left:0px;top:247px;width:28px;height:18px;background:#d4d0c8;box-shadow:inset 1px 1px 0 #fff, inset -1px -1px 0 #808080;overflow:hidden"><div class="t" style="left:2px;top:3px">13</div></div>
<div style="left:0;top:265px;width:28px;height:1px;background:#000"></div>
<div style="left:29px;top:265px;width:273px;height:1px;background:#c0c0c0"></div>
<div style="left:79px;top:247px;width:1px;height:19px;background:#c0c0c0"></div>
<div class="t" style="left:31px;top:250px">36</div>
<div style="left:130px;top:247px;width:1px;height:19px;background:#c0c0c0"></div>
<div class="t" style="left:82px;top:250px">0</div>
<div style="left:181px;top:247px;width:1px;height:19px;background:#c0c0c0"></div>
<div class="t" style="left:133px;top:250px">0</div>
<div style="left:232px;top:247px;width:1px;height:19px;background:#c0c0c0"></div>
<div class="t" style="left:184px;top:250px">0</div>
<div style="left:283px;top:247px;width:1px;height:19px;background:#c0c0c0"></div>
<div class="t" style="left:235px;top:250px">0</div>
<div style="left:334px;top:247px;width:1px;height:19px;background:#c0c0c0"></div>
<div class="t" style="left:286px;top:250px">0</div>
</div>
<div style="left:10px;top:591px;width:302px;height:16px;background-color:#fff;background-image:repeating-conic-gradient(#d4d0c8 0 25%, #fff 0 50%);background-size:2px 2px"></div>
<div style="left:10px;top:591px;width:16px;height:16px;background:#d4d0c8;"></div>
<div style="left:10px;top:591px;width:15px;height:1px;background:#d4d0c8;"></div>
<div style="left:10px;top:591px;width:1px;height:15px;background:#d4d0c8;"></div>
<div style="left:11px;top:592px;width:13px;height:1px;background:#ffffff;"></div>
<div style="left:11px;top:592px;width:1px;height:13px;background:#ffffff;"></div>
<div style="left:11px;top:605px;width:14px;height:1px;background:#808080;"></div>
<div style="left:24px;top:592px;width:1px;height:14px;background:#808080;"></div>
<div style="left:10px;top:606px;width:16px;height:1px;background:#404040;"></div>
<div style="left:25px;top:591px;width:1px;height:16px;background:#404040;"></div>
<div style="left:26px;top:591px;width:16px;height:16px;background:#d4d0c8;"></div>
<div style="left:26px;top:591px;width:15px;height:1px;background:#d4d0c8;"></div>
<div style="left:26px;top:591px;width:1px;height:15px;background:#d4d0c8;"></div>
<div style="left:27px;top:592px;width:13px;height:1px;background:#ffffff;"></div>
<div style="left:27px;top:592px;width:1px;height:13px;background:#ffffff;"></div>
<div style="left:27px;top:605px;width:14px;height:1px;background:#808080;"></div>
<div style="left:40px;top:592px;width:1px;height:14px;background:#808080;"></div>
<div style="left:26px;top:606px;width:16px;height:1px;background:#404040;"></div>
<div style="left:41px;top:591px;width:1px;height:16px;background:#404040;"></div>
<div style="left:296px;top:591px;width:16px;height:16px;background:#d4d0c8;"></div>
<div style="left:296px;top:591px;width:15px;height:1px;background:#d4d0c8;"></div>
<div style="left:296px;top:591px;width:1px;height:15px;background:#d4d0c8;"></div>
<div style="left:297px;top:592px;width:13px;height:1px;background:#ffffff;"></div>
<div style="left:297px;top:592px;width:1px;height:13px;background:#ffffff;"></div>
<div style="left:297px;top:605px;width:14px;height:1px;background:#808080;"></div>
<div style="left:310px;top:592px;width:1px;height:14px;background:#808080;"></div>
<div style="left:296px;top:606px;width:16px;height:1px;background:#404040;"></div>
<div style="left:311px;top:591px;width:1px;height:16px;background:#404040;"></div>
<svg style="position:absolute;left:10px;top:591px" width="16" height="16" shape-rendering="crispEdges"><path d="M5 7.5 L9 3.5 L9 11.5 Z" fill="#000"/></svg>
<svg style="position:absolute;left:296px;top:591px" width="16" height="16" shape-rendering="crispEdges"><path d="M10 7.5 L6 3.5 L6 11.5 Z" fill="#000"/></svg>
<div style="left:4px;top:615px;width:790px;height:1px;background:#808080;"></div>
<div style="left:4px;top:615px;width:1px;height:16px;background:#808080;"></div>
<div style="left:4px;top:631px;width:790px;height:1px;background:#ffffff;"></div>
<div style="left:793px;top:615px;width:1px;height:17px;background:#ffffff;"></div>
<svg style="position:absolute;left:780px;top:618px" width="14" height="14" shape-rendering="crispEdges"><path d="M12 1L1 12M12 5L5 12M12 9L9 12" stroke="#fff" stroke-width="1"/><path d="M13 1L1 13M13 2L2 13M13 5L5 13M13 6L6 13M13 9L9 13M13 10L10 13" stroke="#808080" stroke-width="1"/></svg>
<div style="left:317px;top:42px;width:477px;height:571px;background:#ffffff;"></div>
<svg style="position:absolute;left:0;top:0" width="798" height="636" shape-rendering="crispEdges"><rect x="366" y="71" width="1" height="513" fill="#808080"/><rect x="397" y="71" width="1" height="513" fill="#808080"/><rect x="429" y="71" width="1" height="513" fill="#808080"/><rect x="461" y="71" width="1" height="513" fill="#808080"/><rect x="493" y="71" width="1" height="513" fill="#808080"/><rect x="524" y="71" width="1" height="513" fill="#808080"/><rect x="556" y="71" width="1" height="513" fill="#808080"/><rect x="588" y="71" width="1" height="513" fill="#808080"/><rect x="619" y="71" width="1" height="513" fill="#808080"/><rect x="651" y="71" width="1" height="513" fill="#808080"/><rect x="683" y="71" width="1" height="513" fill="#808080"/><rect x="715" y="71" width="1" height="513" fill="#808080"/><rect x="746" y="71" width="1" height="513" fill="#808080"/><path d="M366,156.00 L368,154.68 L370,153.38 L372,152.08 L374,150.81 L376,149.54 L378,148.29 L380,147.06 L382,145.84 L384,144.63 L386,143.43 L388,142.26 L390,141.09 L392,139.94 L394,138.80 L396,137.68 L398,136.57 L400,135.47 L402,134.39 L404,133.32 L406,132.27 L408,131.23 L410,130.20 L412,129.19 L414,128.19 L416,127.20 L418,126.23 L420,125.28 L422,124.34 L424,123.41 L426,122.49 L428,121.59 L430,120.71 L432,119.83 L434,118.97 L436,118.13 L438,117.30 L440,116.48 L442,115.68 L444,114.89 L446,114.12 L448,113.36 L450,112.61 L452,111.88 L454,111.16 L456,110.45 L458,109.76 L460,109.08 L462,108.42 L464,107.77 L466,107.14 L468,106.51 L470,105.91 L472,105.31 L474,104.73 L476,104.17 L478,103.62 L480,103.08 L482,102.56 L484,102.05 L486,101.55 L488,101.07 L490,100.60 L492,100.15 L494,99.71 L496,99.28 L498,98.87 L500,98.47 L502,98.09 L504,97.72 L506,97.36 L508,97.02 L510,96.69 L512,96.38 L514,96.08 L516,95.79 L518,95.52 L520,95.26 L522,95.02 L524,94.79 L526,94.57 L528,94.37 L530,94.18 L532,94.01 L534,93.84 L536,93.70 L538,93.57 L540,93.45 L542,93.34 L544,93.25 L546,93.17 L548,93.11 L550,93.06 L552,93.03 L554,93.01 L556,93.00 L558,93.01 L560,93.03 L562,93.06 L564,93.11 L566,93.17 L568,93.25 L570,93.34 L572,93.45 L574,93.57 L576,93.70 L578,93.84 L580,94.01 L582,94.18 L584,94.37 L586,94.57 L588,94.79 L590,95.02 L592,95.26 L594,95.52 L596,95.79 L598,96.08 L600,96.38 L602,96.69 L604,97.02 L606,97.36 L608,97.72 L610,98.09 L612,98.47 L614,98.87 L616,99.28 L618,99.71 L620,100.15 L622,100.60 L624,101.07 L626,101.55 L628,102.05 L630,102.56 L632,103.08 L634,103.62 L636,104.17 L638,104.73 L640,105.31 L642,105.91 L644,106.51 L646,107.14 L648,107.77 L650,108.42 L652,109.08 L654,109.76 L656,110.45 L658,111.16 L660,111.88 L662,112.61 L664,113.36 L666,114.12 L668,114.89 L670,115.68 L672,116.48 L674,117.30 L676,118.13 L678,118.97 L680,119.83 L682,120.71 L684,121.59 L686,122.49 L688,123.41 L690,124.34 L692,125.28 L694,126.23 L696,127.20 L698,128.19 L700,129.19 L702,130.20 L704,131.23 L706,132.27 L708,133.32 L710,134.39 L712,135.47 L714,136.57 L716,137.68 L718,138.80 L720,139.94 L722,141.09 L724,142.26 L726,143.43 L728,144.63 L730,145.84 L732,147.06 L734,148.29 L736,149.54 L738,150.81 L740,152.08 L742,153.38 L744,154.68 L746,156.00" stroke="#000" stroke-width="2" fill="none"/><rect x="390" y="145" width="333" height="2" fill="#000"/><rect x="366" y="186" width="381" height="1" fill="#000"/><rect x="366" y="201" width="381" height="1" fill="#000"/><rect x="746" y="93" width="33" height="1" fill="#000"/><rect x="776" y="93" width="1" height="64" fill="#000"/><rect x="764" y="156" width="16" height="1" fill="#000"/><rect x="764" y="146" width="1" height="11" fill="#000"/><path d="M461.5,79 V94 M457.5,84 L461.5,92 L465.5,84 M466.5,79 V94 M462.5,84 L466.5,92 L470.5,84 M472.5,79 V94 M468.5,84 L472.5,92 L476.5,84 M477.5,79 V94 M473.5,84 L477.5,92 L481.5,84 M482.5,79 V94 M478.5,84 L482.5,92 L486.5,84 M487.5,79 V94 M483.5,84 L487.5,92 L491.5,84 M493.5,79 V94 M489.5,84 L493.5,92 L497.5,84 M498.5,79 V94 M494.5,84 L498.5,92 L502.5,84 M503.5,79 V94 M499.5,84 L503.5,92 L507.5,84 M508.5,79 V94 M504.5,84 L508.5,92 L512.5,84 M514.5,79 V94 M510.5,84 L514.5,92 L518.5,84 M519.5,79 V94 M515.5,84 L519.5,92 L523.5,84 M524.5,79 V94 M520.5,84 L524.5,92 L528.5,84 M530.5,79 V94 M526.5,84 L530.5,92 L534.5,84 M535.5,79 V94 M531.5,84 L535.5,92 L539.5,84 M540.5,79 V94 M536.5,84 L540.5,92 L544.5,84 M545.5,79 V94 M541.5,84 L545.5,92 L549.5,84 M551.5,79 V94 M547.5,84 L551.5,92 L555.5,84 M556.5,79 V94 M552.5,84 L556.5,92 L560.5,84 " stroke="#800000" stroke-width="1" fill="none"/><path d="M651.5,79 V94 M647.5,84 L651.5,92 L655.5,84 M656.5,79 V94 M652.5,84 L656.5,92 L660.5,84 M662.5,79 V94 M658.5,84 L662.5,92 L666.5,84 M667.5,79 V94 M663.5,84 L667.5,92 L671.5,84 M672.5,79 V94 M668.5,84 L672.5,92 L676.5,84 M677.5,79 V94 M673.5,84 L677.5,92 L681.5,84 M683.5,79 V94 M679.5,84 L683.5,92 L687.5,84 M688.5,79 V94 M684.5,84 L688.5,92 L692.5,84 M693.5,79 V94 M689.5,84 L693.5,92 L697.5,84 M698.5,79 V94 M694.5,84 L698.5,92 L702.5,84 M704.5,79 V94 M700.5,84 L704.5,92 L708.5,84 M709.5,79 V94 M705.5,84 L709.5,92 L713.5,84 M714.5,79 V94 M710.5,84 L714.5,92 L718.5,84 M720.5,79 V94 M716.5,84 L720.5,92 L724.5,84 M725.5,79 V94 M721.5,84 L725.5,92 L729.5,84 M730.5,79 V94 M726.5,84 L730.5,92 L734.5,84 M735.5,79 V94 M731.5,84 L735.5,92 L739.5,84 M741.5,79 V94 M737.5,84 L741.5,92 L745.5,84 M746.5,79 V94 M742.5,84 L746.5,92 L750.5,84 " stroke="#800000" stroke-width="1" fill="none"/><path d="M556,68 V89 M551,78 L556,89 L561,78" stroke="#800000" stroke-width="2" fill="none"/><path d="M388.5,143.5 H390.5 L392.5,145.5 V147.5 L390.5,149.5 H388.5 L386.5,147.5 V145.5 Z" fill="#fff" stroke="#000" stroke-width="1" shape-rendering="crispEdges"/><path d="M722.5,143.5 H724.5 L726.5,145.5 V147.5 L724.5,149.5 H722.5 L720.5,147.5 V145.5 Z" fill="#fff" stroke="#000" stroke-width="1" shape-rendering="crispEdges"/><path d="M371.28,294.95 L374.24,299.55 M376.56,291.59 L382.57,301.19 M381.83,288.34 L389.48,300.92 M387.11,285.18 L392.48,294.29 M392.39,282.12 L394.11,285.13 M397.67,279.15 L396.42,276.90 M402.94,276.28 L399.23,269.33 M408.22,273.51 L402.60,262.61 M413.50,270.84 L406.41,256.58 M418.78,268.26 L410.43,250.82 M424.06,265.78 L414.96,246.04 M429.33,263.40 L419.60,241.40 M434.61,261.12 L424.91,238.22 M439.89,258.93 L430.32,235.32 M445.17,256.84 L435.92,232.92 M450.44,254.84 L441.64,230.95 M455.72,252.95 L447.87,230.50 M461.00,251.15 L454.15,230.50 M466.28,249.45 L460.34,230.50 M471.56,247.84 L466.50,230.68 M476.83,246.34 L472.65,231.20 M482.11,244.93 L478.57,231.20 M487.39,243.62 L484.42,231.20 M492.67,242.40 L490.19,231.20 M497.94,241.28 L495.94,231.37 M503.22,240.26 L501.65,231.73 M508.50,239.34 L507.30,232.09 M513.78,238.51 L512.88,232.45 M519.06,237.78 L518.42,232.82 M524.33,237.15 L523.90,233.19 M529.61,236.62 L529.32,233.50 M534.89,236.18 L534.71,233.79 M540.17,235.84 L540.07,234.08 M561.28,235.45 L561.39,229.27 M566.56,235.59 L567.01,223.24 M571.83,235.84 L572.81,218.17 M577.11,236.18 L578.78,213.51 M582.39,236.62 L584.83,210.13 M587.67,237.15 L590.97,207.25 M592.94,237.78 L597.10,205.54 M598.22,238.51 L603.31,203.97 M603.50,239.34 L609.41,203.68 M608.78,240.26 L615.57,203.40 M614.06,241.28 L621.52,204.45 M619.33,242.40 L627.34,206.19 M624.61,243.62 L633.12,208.08 M629.89,244.93 L638.49,211.58 M635.17,246.34 L643.81,215.06 M640.44,247.84 L648.94,219.02 M645.72,249.45 L653.75,223.80 M651.00,251.15 L658.54,228.41 M656.28,252.95 L662.53,235.09 M661.56,254.84 L666.42,241.63 M666.83,256.84 L670.65,246.98 M672.11,258.93 L674.55,252.91 M677.39,261.12 L678.39,258.75 M687.94,265.78 L685.91,270.21 M693.22,268.26 L689.35,276.34 M698.50,270.84 L692.81,282.28 M703.78,273.51 L696.23,288.14 M709.06,276.28 L699.62,293.95 M714.33,279.15 L702.98,299.70 M719.61,282.12 L706.39,305.28 M724.89,285.18 L709.82,310.74 M730.17,288.34 L714.09,314.79 M735.44,291.59 L723.95,309.95 M740.72,294.95 L734.83,304.08 " stroke="#0000ff" stroke-width="1" fill="none"/><path d="M366.00,298.40 L369.00,298.50 L375.00,299.70 L382.60,301.20 L390.00,300.90 L391.60,299.70 L393.80,286.20 L395.30,281.00 L397.60,272.60 L403.60,260.60 L411.00,250.00 L420.00,241.00 L429.20,235.80 L439.70,231.30 L444.20,230.50 L465.30,230.50 L470.00,231.20 L493.30,231.20 L510.60,232.30 L525.60,233.30 L542.20,234.20 L543.70,234.80 L550.00,235.50 L556.30,235.30 L565.00,225.00 L577.00,214.50 L589.00,207.80 L602.60,204.00 L617.70,203.30 L632.70,207.80 L647.70,217.60 L650.50,220.80 L658.30,228.00 L667.00,242.60 L670.00,246.00 L680.60,262.10 L683.00,265.00 L688.80,275.40 L696.50,288.60 L704.20,301.80 L712.50,315.00 L716.30,314.50 L728.40,307.30 L744.00,299.50 L746.00,298.40" stroke="#0000ff" stroke-width="1" fill="none"/><path d="M366,298.40 L368,297.08 L370,295.78 L372,294.48 L374,293.21 L376,291.94 L378,290.69 L380,289.46 L382,288.24 L384,287.03 L386,285.83 L388,284.66 L390,283.49 L392,282.34 L394,281.20 L396,280.08 L398,278.97 L400,277.87 L402,276.79 L404,275.72 L406,274.67 L408,273.63 L410,272.60 L412,271.59 L414,270.59 L416,269.60 L418,268.63 L420,267.68 L422,266.74 L424,265.81 L426,264.89 L428,263.99 L430,263.11 L432,262.23 L434,261.37 L436,260.53 L438,259.70 L440,258.88 L442,258.08 L444,257.29 L446,256.52 L448,255.76 L450,255.01 L452,254.28 L454,253.56 L456,252.85 L458,252.16 L460,251.48 L462,250.82 L464,250.17 L466,249.54 L468,248.91 L470,248.31 L472,247.71 L474,247.13 L476,246.57 L478,246.02 L480,245.48 L482,244.96 L484,244.45 L486,243.95 L488,243.47 L490,243.00 L492,242.55 L494,242.11 L496,241.68 L498,241.27 L500,240.87 L502,240.49 L504,240.12 L506,239.76 L508,239.42 L510,239.09 L512,238.78 L514,238.48 L516,238.19 L518,237.92 L520,237.66 L522,237.42 L524,237.19 L526,236.97 L528,236.77 L530,236.58 L532,236.41 L534,236.24 L536,236.10 L538,235.97 L540,235.85 L542,235.74 L544,235.65 L546,235.57 L548,235.51 L550,235.46 L552,235.43 L554,235.41 L556,235.40 L558,235.41 L560,235.43 L562,235.46 L564,235.51 L566,235.57 L568,235.65 L570,235.74 L572,235.85 L574,235.97 L576,236.10 L578,236.24 L580,236.41 L582,236.58 L584,236.77 L586,236.97 L588,237.19 L590,237.42 L592,237.66 L594,237.92 L596,238.19 L598,238.48 L600,238.78 L602,239.09 L604,239.42 L606,239.76 L608,240.12 L610,240.49 L612,240.87 L614,241.27 L616,241.68 L618,242.11 L620,242.55 L622,243.00 L624,243.47 L626,243.95 L628,244.45 L630,244.96 L632,245.48 L634,246.02 L636,246.57 L638,247.13 L640,247.71 L642,248.31 L644,248.91 L646,249.54 L648,250.17 L650,250.82 L652,251.48 L654,252.16 L656,252.85 L658,253.56 L660,254.28 L662,255.01 L664,255.76 L666,256.52 L668,257.29 L670,258.08 L672,258.88 L674,259.70 L676,260.53 L678,261.37 L680,262.23 L682,263.11 L684,263.99 L686,264.89 L688,265.81 L690,266.74 L692,267.68 L694,268.63 L696,269.60 L698,270.59 L700,271.59 L702,272.60 L704,273.63 L706,274.67 L708,275.72 L710,276.79 L712,277.87 L714,278.97 L716,280.08 L718,281.20 L720,282.34 L722,283.49 L724,284.66 L726,285.83 L728,287.03 L730,288.24 L732,289.46 L734,290.69 L736,291.94 L738,293.21 L740,294.48 L742,295.78 L744,297.08 L746,298.40" stroke="#000" stroke-width="2" fill="none"/><rect x="387" y="287" width="339" height="2" fill="#000"/><path d="M366.00,427.20 L357.01,413.65 M371.28,423.75 L361.90,409.20 M376.56,420.39 L366.77,404.77 M381.83,417.14 L383.17,419.33 M387.11,413.98 L399.73,435.38 M392.39,410.92 L403.75,430.82 M397.67,407.95 L407.78,426.25 M402.94,405.08 L411.81,421.67 M408.22,402.31 L415.85,417.09 M413.50,399.64 L419.89,412.50 M418.78,397.06 L423.96,407.88 M424.06,394.58 L428.04,403.24 M429.33,392.20 L432.15,398.58 M434.61,389.92 L436.29,393.88 M439.89,387.73 L440.46,389.15 M450.44,383.64 L449.41,380.83 M455.72,381.75 L453.95,376.70 M461.00,379.95 L458.54,372.53 M466.28,378.25 L463.97,370.89 M471.56,376.64 L469.52,369.75 M476.83,375.14 L475.06,368.73 M482.11,373.73 L480.56,367.71 M487.39,372.42 L486.02,366.70 M492.67,371.20 L491.45,365.69 M497.94,370.08 L496.87,364.78 M503.22,369.06 L502.30,364.07 M508.50,368.14 L507.71,363.36 M513.78,367.31 L513.11,362.80 M519.06,366.58 L518.57,362.80 M524.33,365.95 L523.99,362.80 M529.61,365.42 L529.37,362.80 M534.89,364.98 L534.73,362.80 M540.17,364.64 L540.07,362.80 M545.44,364.39 L545.39,362.94 M550.72,364.25 L550.70,363.08 M561.28,364.25 L560.78,391.08 M566.56,364.39 L565.65,388.89 M571.83,364.64 L570.62,386.67 M577.11,364.98 L575.68,384.39 M582.39,365.42 L580.85,382.07 M587.67,365.95 L586.15,379.70 M592.94,366.58 L591.54,377.46 M598.22,367.31 L597.05,375.24 M603.50,368.14 L602.70,372.97 M608.78,369.06 L608.49,370.65 M619.33,371.20 L620.01,368.16 M624.61,372.42 L625.91,367.00 M629.89,373.73 L631.93,365.82 M635.17,375.14 L638.07,364.61 M640.44,376.64 L644.25,363.73 M645.72,378.25 L650.44,363.18 M651.00,379.95 L656.75,362.62 M656.28,381.75 L661.96,365.51 M661.56,383.64 L667.12,368.54 M666.83,385.64 L672.28,371.56 M672.11,387.73 L677.44,374.59 M677.39,389.92 L682.60,377.61 M682.67,392.20 L687.77,380.65 M687.94,394.58 L692.96,383.69 M693.22,397.06 L698.16,386.74 M698.50,399.64 L703.39,389.81 M703.78,402.31 L708.64,392.89 M709.06,405.08 L713.92,395.98 M714.33,407.95 L719.23,399.09 M719.61,410.92 L724.57,402.23 M724.89,413.98 L729.95,405.39 M730.17,417.14 L726.25,423.57 M735.44,420.39 L716.28,450.99 M740.72,423.75 L720.24,455.52 M746.00,427.20 L724.21,460.06 " stroke="#0000ff" stroke-width="1" fill="none"/><path d="M356.30,414.30 L369.70,402.10 L397.60,437.80 L441.30,388.20 L458.90,372.20 L465.50,370.50 L495.20,365.00 L512.00,362.80 L540.30,362.80 L555.30,363.20 L556.20,363.50 L556.50,393.00 L587.70,379.00 L609.60,370.20 L641.20,364.00 L657.00,362.60 L733.90,407.70 L714.20,448.60 L724.50,460.40" stroke="#0000ff" stroke-width="1" fill="none"/><path d="M366,427.20 L368,425.88 L370,424.58 L372,423.28 L374,422.01 L376,420.74 L378,419.49 L380,418.26 L382,417.04 L384,415.83 L386,414.63 L388,413.46 L390,412.29 L392,411.14 L394,410.00 L396,408.88 L398,407.77 L400,406.67 L402,405.59 L404,404.52 L406,403.47 L408,402.43 L410,401.40 L412,400.39 L414,399.39 L416,398.40 L418,397.43 L420,396.48 L422,395.54 L424,394.61 L426,393.69 L428,392.79 L430,391.91 L432,391.03 L434,390.17 L436,389.33 L438,388.50 L440,387.68 L442,386.88 L444,386.09 L446,385.32 L448,384.56 L450,383.81 L452,383.08 L454,382.36 L456,381.65 L458,380.96 L460,380.28 L462,379.62 L464,378.97 L466,378.34 L468,377.71 L470,377.11 L472,376.51 L474,375.93 L476,375.37 L478,374.82 L480,374.28 L482,373.76 L484,373.25 L486,372.75 L488,372.27 L490,371.80 L492,371.35 L494,370.91 L496,370.48 L498,370.07 L500,369.67 L502,369.29 L504,368.92 L506,368.56 L508,368.22 L510,367.89 L512,367.58 L514,367.28 L516,366.99 L518,366.72 L520,366.46 L522,366.22 L524,365.99 L526,365.77 L528,365.57 L530,365.38 L532,365.21 L534,365.04 L536,364.90 L538,364.77 L540,364.65 L542,364.54 L544,364.45 L546,364.37 L548,364.31 L550,364.26 L552,364.23 L554,364.21 L556,364.20 L558,364.21 L560,364.23 L562,364.26 L564,364.31 L566,364.37 L568,364.45 L570,364.54 L572,364.65 L574,364.77 L576,364.90 L578,365.04 L580,365.21 L582,365.38 L584,365.57 L586,365.77 L588,365.99 L590,366.22 L592,366.46 L594,366.72 L596,366.99 L598,367.28 L600,367.58 L602,367.89 L604,368.22 L606,368.56 L608,368.92 L610,369.29 L612,369.67 L614,370.07 L616,370.48 L618,370.91 L620,371.35 L622,371.80 L624,372.27 L626,372.75 L628,373.25 L630,373.76 L632,374.28 L634,374.82 L636,375.37 L638,375.93 L640,376.51 L642,377.11 L644,377.71 L646,378.34 L648,378.97 L650,379.62 L652,380.28 L654,380.96 L656,381.65 L658,382.36 L660,383.08 L662,383.81 L664,384.56 L666,385.32 L668,386.09 L670,386.88 L672,387.68 L674,388.50 L676,389.33 L678,390.17 L680,391.03 L682,391.91 L684,392.79 L686,393.69 L688,394.61 L690,395.54 L692,396.48 L694,397.43 L696,398.40 L698,399.39 L700,400.39 L702,401.40 L704,402.43 L706,403.47 L708,404.52 L710,405.59 L712,406.67 L714,407.77 L716,408.88 L718,410.00 L720,411.14 L722,412.29 L724,413.46 L726,414.63 L728,415.83 L730,417.04 L732,418.26 L734,419.49 L736,420.74 L738,422.01 L740,423.28 L742,424.58 L744,425.88 L746,427.20" stroke="#000" stroke-width="2" fill="none"/><rect x="383" y="416" width="347" height="2" fill="#000"/><path d="M366.00,555.20 L376.76,571.42 M371.28,551.75 L381.76,568.01 M376.56,548.39 L386.72,564.63 M381.83,545.14 L398.21,572.08 M387.11,541.98 L406.09,574.18 M392.39,538.92 L411.32,572.07 M397.67,535.95 L416.48,570.00 M402.94,533.08 L421.57,567.95 M408.22,530.31 L426.59,565.93 M413.50,527.64 L431.39,563.61 M418.78,525.06 L435.94,560.90 M424.06,522.58 L440.46,558.20 M429.33,520.20 L444.95,555.52 M434.61,517.92 L449.41,552.85 M439.89,515.73 L453.86,550.20 M445.17,513.64 L458.29,547.56 M450.44,511.64 L462.80,545.18 M455.72,509.75 L467.50,543.41 M461.00,507.95 L472.18,541.66 M466.28,506.25 L476.88,540.11 M471.56,504.64 L481.64,538.87 M476.83,503.14 L486.37,537.64 M482.11,501.73 L491.06,536.41 M487.39,500.42 L495.73,535.23 M492.67,499.20 L500.38,534.11 M497.94,498.08 L505.02,532.99 M503.22,497.06 L509.63,531.87 M508.50,496.14 L514.24,530.75 M513.78,495.31 L518.84,529.64 M519.06,494.58 L523.43,528.53 M524.33,493.95 L528.08,527.81 M529.61,493.42 L532.74,527.35 M534.89,492.98 L537.40,527.10 M540.17,492.64 L542.07,527.10 M545.44,492.39 L546.72,527.10 M550.72,492.25 L551.36,527.10 M556.00,492.20 L556.00,527.10 M561.28,492.25 L560.64,527.10 M566.56,492.39 L565.28,527.10 M571.83,492.64 L569.93,527.10 M577.11,492.98 L574.58,527.34 M582.39,493.42 L579.21,527.95 M587.67,493.95 L583.84,528.57 M592.94,494.58 L588.48,529.24 M598.22,495.31 L593.09,530.17 M603.50,496.14 L597.70,531.10 M608.78,497.06 L602.33,532.04 M614.06,498.08 L606.98,532.98 M619.33,499.20 L611.66,533.93 M624.61,500.42 L616.36,534.88 M629.89,501.73 L621.07,535.92 M635.17,503.14 L625.70,537.41 M640.44,504.64 L630.35,538.91 M645.72,506.25 L635.02,540.42 M651.00,507.95 L639.73,541.94 M656.28,509.75 L644.47,543.47 M661.56,511.64 L649.26,545.02 M666.83,513.64 L653.99,546.84 M672.11,515.73 L658.61,549.04 M677.39,517.92 L663.27,551.25 M682.67,520.20 L667.96,553.47 M687.94,522.58 L672.68,555.72 M693.22,525.06 L677.45,557.98 M698.50,527.64 L682.27,560.27 M703.78,530.31 L686.89,563.04 M709.06,533.08 L691.46,566.02 M714.33,535.95 L696.06,569.01 M719.61,538.92 L700.70,572.03 M724.89,541.98 L705.38,575.07 M730.17,545.14 L712.46,574.26 M735.44,548.39 L724.10,566.51 M740.72,551.75 L728.88,570.11 M746.00,555.20 L733.70,573.75 " stroke="#0000ff" stroke-width="1" fill="none"/><path d="M376.50,571.60 L387.50,564.10 L402.80,575.50 L429.40,564.80 L461.40,545.70 L475.00,540.60 L493.80,535.70 L525.20,528.10 L535.20,527.10 L572.80,527.10 L587.80,529.10 L620.40,535.70 L652.00,545.90 L683.60,560.90 L708.80,577.30 L722.90,565.60 L734.30,574.20" stroke="#0000ff" stroke-width="1" fill="none"/><path d="M366,555.20 L368,553.88 L370,552.58 L372,551.28 L374,550.01 L376,548.74 L378,547.49 L380,546.26 L382,545.04 L384,543.83 L386,542.63 L388,541.46 L390,540.29 L392,539.14 L394,538.00 L396,536.88 L398,535.77 L400,534.67 L402,533.59 L404,532.52 L406,531.47 L408,530.43 L410,529.40 L412,528.39 L414,527.39 L416,526.40 L418,525.43 L420,524.48 L422,523.54 L424,522.61 L426,521.69 L428,520.79 L430,519.91 L432,519.03 L434,518.17 L436,517.33 L438,516.50 L440,515.68 L442,514.88 L444,514.09 L446,513.32 L448,512.56 L450,511.81 L452,511.08 L454,510.36 L456,509.65 L458,508.96 L460,508.28 L462,507.62 L464,506.97 L466,506.34 L468,505.71 L470,505.11 L472,504.51 L474,503.93 L476,503.37 L478,502.82 L480,502.28 L482,501.76 L484,501.25 L486,500.75 L488,500.27 L490,499.80 L492,499.35 L494,498.91 L496,498.48 L498,498.07 L500,497.67 L502,497.29 L504,496.92 L506,496.56 L508,496.22 L510,495.89 L512,495.58 L514,495.28 L516,494.99 L518,494.72 L520,494.46 L522,494.22 L524,493.99 L526,493.77 L528,493.57 L530,493.38 L532,493.21 L534,493.04 L536,492.90 L538,492.77 L540,492.65 L542,492.54 L544,492.45 L546,492.37 L548,492.31 L550,492.26 L552,492.23 L554,492.21 L556,492.20 L558,492.21 L560,492.23 L562,492.26 L564,492.31 L566,492.37 L568,492.45 L570,492.54 L572,492.65 L574,492.77 L576,492.90 L578,493.04 L580,493.21 L582,493.38 L584,493.57 L586,493.77 L588,493.99 L590,494.22 L592,494.46 L594,494.72 L596,494.99 L598,495.28 L600,495.58 L602,495.89 L604,496.22 L606,496.56 L608,496.92 L610,497.29 L612,497.67 L614,498.07 L616,498.48 L618,498.91 L620,499.35 L622,499.80 L624,500.27 L626,500.75 L628,501.25 L630,501.76 L632,502.28 L634,502.82 L636,503.37 L638,503.93 L640,504.51 L642,505.11 L644,505.71 L646,506.34 L648,506.97 L650,507.62 L652,508.28 L654,508.96 L656,509.65 L658,510.36 L660,511.08 L662,511.81 L664,512.56 L666,513.32 L668,514.09 L670,514.88 L672,515.68 L674,516.50 L676,517.33 L678,518.17 L680,519.03 L682,519.91 L684,520.79 L686,521.69 L688,522.61 L690,523.54 L692,524.48 L694,525.43 L696,526.40 L698,527.39 L700,528.39 L702,529.40 L704,530.43 L706,531.47 L708,532.52 L710,533.59 L712,534.67 L714,535.77 L716,536.88 L718,538.00 L720,539.14 L722,540.29 L724,541.46 L726,542.63 L728,543.83 L730,545.04 L732,546.26 L734,547.49 L736,548.74 L738,550.01 L740,551.28 L742,552.58 L744,553.88 L746,555.20" stroke="#000" stroke-width="2" fill="none"/><rect x="387" y="544" width="339" height="2" fill="#000"/></svg>
<div class="lb" style="left:326.5px;top:162px;width:80px;text-align:center"><span>1</span></div><div class="lb" style="left:357.5px;top:144px;width:80px;text-align:center"><span>2</span></div><div class="lb" style="left:389.5px;top:128px;width:80px;text-align:center"><span>3</span></div><div class="lb" style="left:421.5px;top:115px;width:80px;text-align:center"><span>4</span></div><div class="lb" style="left:453.5px;top:106px;width:80px;text-align:center"><span>5</span></div><div class="lb" style="left:484.5px;top:101px;width:80px;text-align:center"><span>6</span></div><div class="lb" style="left:516.5px;top:100px;width:80px;text-align:center"><span>7</span></div><div class="lb" style="left:548.5px;top:101px;width:80px;text-align:center"><span>8</span></div><div class="lb" style="left:579.5px;top:106px;width:80px;text-align:center"><span>9</span></div><div class="lb" style="left:611.5px;top:115px;width:80px;text-align:center"><span>10</span></div><div class="lb" style="left:643.5px;top:128px;width:80px;text-align:center"><span>11</span></div><div class="lb" style="left:675.5px;top:144px;width:80px;text-align:center"><span>12</span></div><div class="lb" style="left:706.5px;top:162px;width:80px;text-align:center"><span>13</span></div><div class="lb" style="left:342.0px;top:175px;width:80px;text-align:center"><span>3</span></div><div class="lb" style="left:373.5px;top:175px;width:80px;text-align:center"><span>3</span></div><div class="lb" style="left:405.5px;top:175px;width:80px;text-align:center"><span>3</span></div><div class="lb" style="left:437.5px;top:175px;width:80px;text-align:center"><span>3</span></div><div class="lb" style="left:469.0px;top:175px;width:80px;text-align:center"><span>3</span></div><div class="lb" style="left:500.5px;top:175px;width:80px;text-align:center"><span>3</span></div><div class="lb" style="left:532.5px;top:175px;width:80px;text-align:center"><span>3</span></div><div class="lb" style="left:564.0px;top:175px;width:80px;text-align:center"><span>3</span></div><div class="lb" style="left:595.5px;top:175px;width:80px;text-align:center"><span>3</span></div><div class="lb" style="left:627.5px;top:175px;width:80px;text-align:center"><span>3</span></div><div class="lb" style="left:659.5px;top:175px;width:80px;text-align:center"><span>3</span></div><div class="lb" style="left:691.0px;top:175px;width:80px;text-align:center"><span>3</span></div><div class="lb" style="left:516.5px;top:190px;width:80px;text-align:center"><span>L = 36</span></div><div class="lb" style="left:720.5px;top:119px;width:80px;text-align:center"><span>H = 6</span></div><div class="lb" style="left:746px;top:145px"><span>= 1</span></div><div class="lb" style="left:461px;top:64px"><span>q = -2</span></div><div class="lb" style="left:493px;top:64px"><span>q = -2</span></div><div class="lb" style="left:524px;top:64px"><span>q = -2</span></div><div class="lb" style="left:651px;top:64px"><span>q = -2</span></div><div class="lb" style="left:683px;top:64px"><span>q = -2</span></div><div class="lb" style="left:715px;top:64px"><span>q = -2</span></div><div class="lb" style="left:520px;top:52px;width:73px;text-align:center"><span>P = -10</span></div><div class="lb" style="left:326.5px;top:305px;width:80px;text-align:center"><span>1</span></div><div class="lb" style="left:357.5px;top:286px;width:80px;text-align:center"><span>2</span></div><div class="lb" style="left:389.5px;top:270px;width:80px;text-align:center"><span>3</span></div><div class="lb" style="left:421.5px;top:258px;width:80px;text-align:center"><span>4</span></div><div class="lb" style="left:453.5px;top:249px;width:80px;text-align:center"><span>5</span></div><div class="lb" style="left:484.5px;top:244px;width:80px;text-align:center"><span>6</span></div><div class="lb" style="left:516.5px;top:242px;width:80px;text-align:center"><span>7</span></div><div class="lb" style="left:548.5px;top:244px;width:80px;text-align:center"><span>8</span></div><div class="lb" style="left:579.5px;top:249px;width:80px;text-align:center"><span>9</span></div><div class="lb" style="left:611.5px;top:258px;width:80px;text-align:center"><span>10</span></div><div class="lb" style="left:643.5px;top:270px;width:80px;text-align:center"><span>11</span></div><div class="lb" style="left:675.5px;top:286px;width:80px;text-align:center"><span>12</span></div><div class="lb" style="left:706.5px;top:305px;width:80px;text-align:center"><span>13</span></div><div class="lb" style="left:326.5px;top:434px;width:80px;text-align:center"><span>1</span></div><div class="lb" style="left:357.5px;top:415px;width:80px;text-align:center"><span>2</span></div><div class="lb" style="left:389.5px;top:399px;width:80px;text-align:center"><span>3</span></div><div class="lb" style="left:421.5px;top:386px;width:80px;text-align:center"><span>4</span></div><div class="lb" style="left:453.5px;top:378px;width:80px;text-align:center"><span>5</span></div><div class="lb" style="left:484.5px;top:372px;width:80px;text-align:center"><span>6</span></div><div class="lb" style="left:516.5px;top:371px;width:80px;text-align:center"><span>7</span></div><div class="lb" style="left:548.5px;top:372px;width:80px;text-align:center"><span>8</span></div><div class="lb" style="left:579.5px;top:378px;width:80px;text-align:center"><span>9</span></div><div class="lb" style="left:611.5px;top:386px;width:80px;text-align:center"><span>10</span></div><div class="lb" style="left:643.5px;top:399px;width:80px;text-align:center"><span>11</span></div><div class="lb" style="left:675.5px;top:415px;width:80px;text-align:center"><span>12</span></div><div class="lb" style="left:706.5px;top:434px;width:80px;text-align:center"><span>13</span></div><div class="lb" style="left:326.5px;top:562px;width:80px;text-align:center"><span>1</span></div><div class="lb" style="left:357.5px;top:543px;width:80px;text-align:center"><span>2</span></div><div class="lb" style="left:389.5px;top:527px;width:80px;text-align:center"><span>3</span></div><div class="lb" style="left:421.5px;top:514px;width:80px;text-align:center"><span>4</span></div><div class="lb" style="left:453.5px;top:506px;width:80px;text-align:center"><span>5</span></div><div class="lb" style="left:484.5px;top:500px;width:80px;text-align:center"><span>6</span></div><div class="lb" style="left:516.5px;top:499px;width:80px;text-align:center"><span>7</span></div><div class="lb" style="left:548.5px;top:500px;width:80px;text-align:center"><span>8</span></div><div class="lb" style="left:579.5px;top:506px;width:80px;text-align:center"><span>9</span></div><div class="lb" style="left:611.5px;top:514px;width:80px;text-align:center"><span>10</span></div><div class="lb" style="left:643.5px;top:527px;width:80px;text-align:center"><span>11</span></div><div class="lb" style="left:675.5px;top:543px;width:80px;text-align:center"><span>12</span></div><div class="lb" style="left:706.5px;top:562px;width:80px;text-align:center"><span>13</span></div>
<svg style="position:absolute;left:0;top:0" width="798" height="636" shape-rendering="crispEdges"><path d="M363,189.5 L369,183.5" stroke="#000" stroke-width="2.6"/><path d="M394,189.5 L400,183.5" stroke="#000" stroke-width="2.6"/><path d="M426,189.5 L432,183.5" stroke="#000" stroke-width="2.6"/><path d="M458,189.5 L464,183.5" stroke="#000" stroke-width="2.6"/><path d="M490,189.5 L496,183.5" stroke="#000" stroke-width="2.6"/><path d="M521,189.5 L527,183.5" stroke="#000" stroke-width="2.6"/><path d="M553,189.5 L559,183.5" stroke="#000" stroke-width="2.6"/><path d="M585,189.5 L591,183.5" stroke="#000" stroke-width="2.6"/><path d="M616,189.5 L622,183.5" stroke="#000" stroke-width="2.6"/><path d="M648,189.5 L654,183.5" stroke="#000" stroke-width="2.6"/><path d="M680,189.5 L686,183.5" stroke="#000" stroke-width="2.6"/><path d="M712,189.5 L718,183.5" stroke="#000" stroke-width="2.6"/><path d="M743,189.5 L749,183.5" stroke="#000" stroke-width="2.6"/><path d="M363,204.5 L369,198.5" stroke="#000" stroke-width="2.6"/><path d="M743,204.5 L749,198.5" stroke="#000" stroke-width="2.6"/><path d="M773,89.5 L779,95.5" stroke="#000" stroke-width="2.6"/><path d="M773,152.5 L779,158.5" stroke="#000" stroke-width="2.6"/><path d="M761,142.5 L767,148.5" stroke="#000" stroke-width="2.6"/><path d="M761,152.5 L767,158.5" stroke="#000" stroke-width="2.6"/><rect x="355" y="155" width="27" height="2" fill="#000"/><path d="M351,161.5 L356,156.5 M356,161.5 L361,156.5 M361,161.5 L366,156.5 M366,161.5 L371,156.5 M371,161.5 L376,156.5 M376,161.5 L381,156.5 " stroke="#000" stroke-width="1"/><rect x="735" y="155" width="29" height="2" fill="#000"/><path d="M731,161.5 L736,156.5 M736,161.5 L741,156.5 M741,161.5 L746,156.5 M746,161.5 L751,156.5 M751,161.5 L756,156.5 M756,161.5 L761,156.5 " stroke="#000" stroke-width="1"/><path d="M365.5,152.5 H367.5 L369.5,154.5 V157.5 L367.5,159.5 H365.5 L363.5,157.5 V154.5 Z" fill="#fff" stroke="#000" stroke-width="1" shape-rendering="crispEdges"/><path d="M745.5,152.5 H747.5 L749.5,154.5 V157.5 L747.5,159.5 H745.5 L743.5,157.5 V154.5 Z" fill="#fff" stroke="#000" stroke-width="1" shape-rendering="crispEdges"/><path d="M555.5,89.5 H557.5 L559.5,91.5 V94.5 L557.5,96.5 H555.5 L553.5,94.5 V91.5 Z" fill="#fff" stroke="#000" stroke-width="1" shape-rendering="crispEdges"/></svg>
</body></html>
